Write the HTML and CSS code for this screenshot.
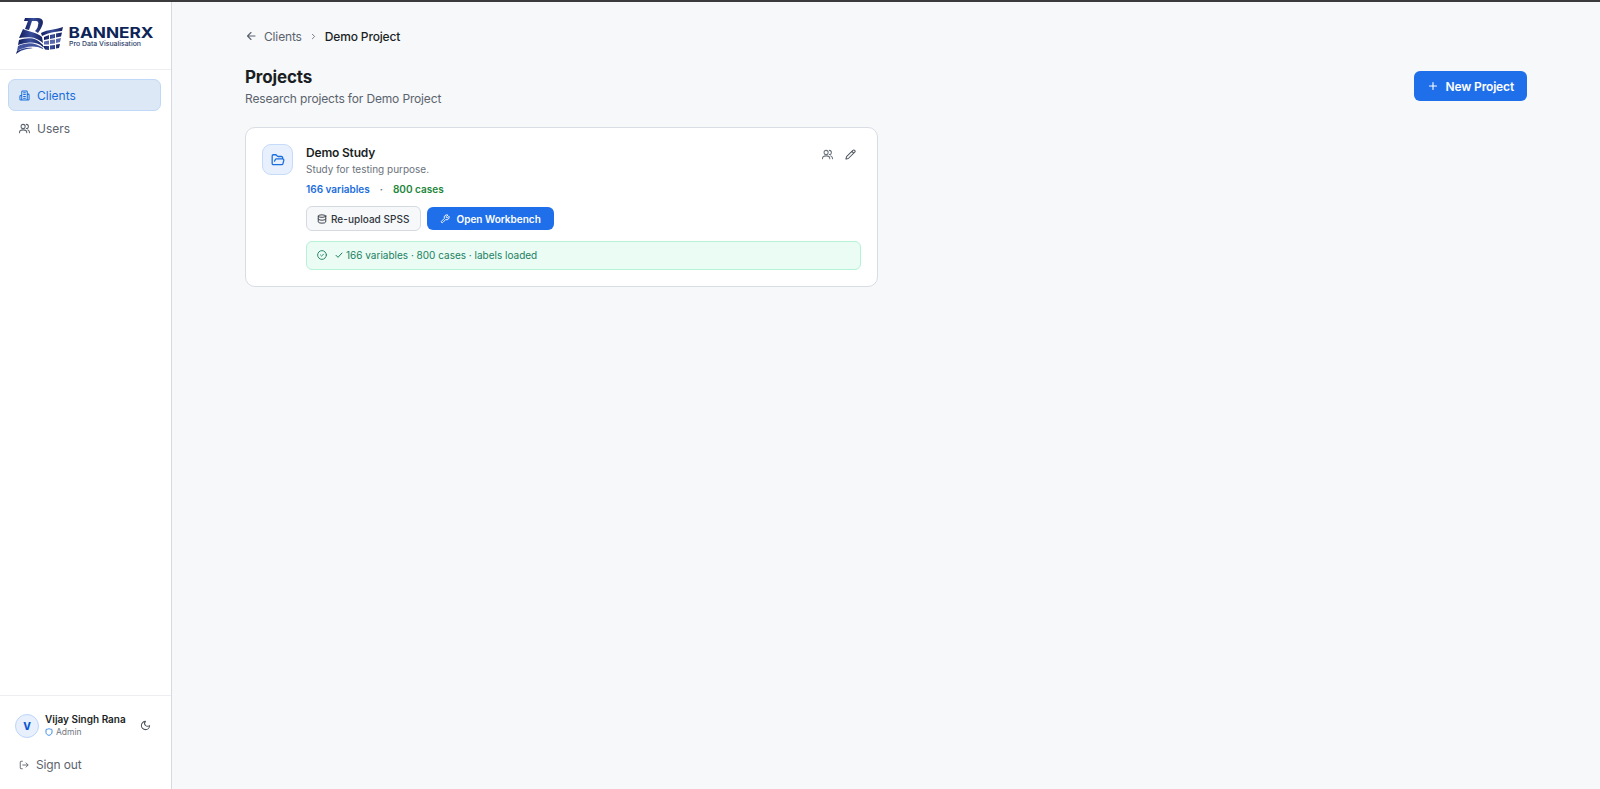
FILE: index.html
```html
<!DOCTYPE html>
<html lang="en">
<head>
    <meta charset="UTF-8">
    <title>BannerX - Projects</title>
    <link rel="stylesheet" href="styles.css">
</head>
<body>
    <!-- Sidebar -->
    <aside class="sidebar">
        <div class="brand">
            <svg class="logo" width="140" height="40" viewBox="0 0 140 40">
                <defs>
                    <linearGradient id="navy" x1="0" y1="0" x2="1" y2="0">
                        <stop offset="0" stop-color="#101c5c"/>
                        <stop offset=".5" stop-color="#3a4f9c"/>
                        <stop offset="1" stop-color="#16215f"/>
                    </linearGradient>
                </defs>
                <path fill="url(#navy)" d="M9 1h13c5 0 6 4 4 8-1 3-3 5-4 7l-3-2c2-2 3-4 3-6 1-2 0-4-2-4h-4l-3 9-4-1 3-8H8z"/>
                <path fill="url(#navy)" d="M7 12c6 3 13 3 19 8l1 6C19 19 12 20 3 21z"/>
                <path fill="url(#navy)" d="M3 23c9-3 17-3 24 5v2c-7-6-16-5-25-2z"/>
                <path fill="#4253a0" d="M2 29c9-4 17-4 25 2v1c-8-4-17-3-26 2z"/>
                <path fill="url(#navy)" d="M1 34c6-3 10-4 16-3-7 1-12 2-17 6z"/>
                <path fill="url(#navy)" d="M25 16c8-4 13-3 22-6l-1 4c-8 1-12 1-20 5z"/>
                <path fill="url(#navy)" d="M28 20l5-2v4l-5 1zM34 18l5-1v4l-5 1zM40 16.500l6-1-1 4-5 1z"/>
                <path fill="#5a69ab" d="M28 24.500l5-1v4h-5zM34 23l5-.500v4l-5 .500zM40 22l5-1-1 4-4 1z"/>
                <path fill="url(#navy)" d="M27 29h6v4l-4-.500zM34 28.500l5-.500v4l-5 .500zM40 27.500l4-.500-1 4-3 .500z"/>
                <text class="logo-name" x="52.500" y="20.500" textLength="85" lengthAdjust="spacingAndGlyphs">BANNERX</text>
                <text class="logo-tag" x="53" y="28.500" textLength="72" lengthAdjust="spacingAndGlyphs">Pro Data Visualisation</text>
            </svg>
        </div>

        <nav class="nav">
            <a class="nav-item active" href="#">
                <svg class="icon" width="11" height="11" viewBox="0 0 24 24"><path d="M6 22V4a2 2 0 0 1 2-2h8a2 2 0 0 1 2 2v18zM6 12H4a2 2 0 0 0-2 2v6a2 2 0 0 0 2 2h2M18 9h2a2 2 0 0 1 2 2v9a2 2 0 0 1-2 2h-2M10 6h4M10 10h4M10 14h4M10 18h4"/></svg>
                Clients
            </a>
            <a class="nav-item" href="#">
                <svg class="icon" width="11" height="11" viewBox="0 0 24 24"><path d="M1 21c0-4 3-6 8-6s8 2 8 6M16 3a4.500 4.500 0 0 1 0 9M19 15c2.500 1 4 3 4 6"/><circle cx="9" cy="7.500" r="4.500"/></svg>
                Users
            </a>
        </nav>

        <div class="account">
            <div class="user">
                <div class="avatar">V</div>
                <div class="user-info">
                    <div class="user-name">Vijay Singh Rana</div>
                    <div class="user-role">
                        <svg class="icon" width="8" height="8" viewBox="0 0 24 24"><path d="M21 13c0 5-3.500 7.500-8.700 9a1 1 0 0 1-.7 0C6.500 20.500 3 18 3 13V5a1 1 0 0 1 1-1c2 0 5.500-.500 7.200-1.700a1.200 1.200 0 0 1 1.500 0C14.500 3.500 18 4 20 4a1 1 0 0 1 1 1z"/></svg>
                        Admin
                    </div>
                </div>
                <svg class="icon moon" width="11" height="11" viewBox="0 0 24 24"><path d="M12 3a6 6 0 0 0 9 9 9 9 0 1 1-9-9z"/></svg>
            </div>
            <a class="sign-out" href="#">
                <svg class="icon" width="10" height="10" viewBox="0 0 24 24"><path d="M8 21H5a2 2 0 0 1-2-2V5a2 2 0 0 1 2-2h3M17 17l5-5-5-5M21 12H9"/></svg>
                Sign out
            </a>
        </div>
    </aside>

    <!-- Content -->
    <main class="main">
        <div class="breadcrumb">
            <svg class="icon" width="12" height="12" viewBox="0 0 24 24"><path d="M12 19l-7-7 7-7M20 12H5"/></svg>
            <a href="#">Clients</a>
            <svg class="icon chevron" width="9" height="9" viewBox="0 0 24 24"><path d="M9 18l6-6-6-6"/></svg>
            <span class="current">Demo Project</span>
        </div>

        <header class="page-head">
            <div>
                <h1>Projects</h1>
                <p>Research projects for Demo Project</p>
            </div>
            <button class="btn-new">
                <svg class="icon" width="12" height="12" viewBox="0 0 24 24"><path d="M5 12h14M12 5v14"/></svg>
                New Project
            </button>
        </header>

        <section class="projects">
            <article class="card">
                <div class="folder">
                    <svg class="icon" width="14" height="14" viewBox="0 0 24 24"><path d="M6 14l1.500-2.900A2 2 0 0 1 9.240 10H20a2 2 0 0 1 1.940 2.500l-1.540 6a2 2 0 0 1-1.950 1.500H4a2 2 0 0 1-2-2V5a2 2 0 0 1 2-2h3.900a2 2 0 0 1 1.690.9l.81 1.200a2 2 0 0 0 1.670.9H18a2 2 0 0 1 2 2v2"/></svg>
                </div>
                <div class="card-body">
                    <div class="card-head">
                        <div>
                            <h2>Demo Study</h2>
                            <p>Study for testing purpose.</p>
                        </div>
                        <div class="card-tools">
                            <svg class="icon" width="11" height="11" viewBox="0 0 24 24"><path d="M1 21c0-4 3-6 8-6s8 2 8 6M16 3a4.500 4.500 0 0 1 0 9M19 15c2.500 1 4 3 4 6"/><circle cx="9" cy="7.500" r="4.500"/></svg>
                            <svg class="icon edit" width="11" height="11" viewBox="0 0 24 24"><path d="M21.200 6.800a1 1 0 0 0-4-4L3.800 16.200a2 2 0 0 0-.5.8L2 21.400a.5.5 0 0 0 .6.6L7 20.700a2 2 0 0 0 .8-.5zM15 5l4 4"/></svg>
                        </div>
                    </div>
                    <div class="stats">
                        <span class="variables">166 variables</span>
                        <span class="dot">·</span>
                        <span class="cases">800 cases</span>
                    </div>
                    <div class="actions">
                        <button class="btn-upload">
                            <svg class="icon" width="10" height="10" viewBox="0 0 24 24"><ellipse cx="12" cy="5" rx="9" ry="3"/><path d="M3 5v14a9 3 0 0 0 18 0V5M3 12a9 3 0 0 0 18 0"/></svg>
                            Re-upload SPSS
                        </button>
                        <button class="btn-open">
                            <svg class="icon" width="10" height="10" viewBox="0 0 24 24"><path d="M14.700 6.300a1 1 0 0 0 0 1.400l1.600 1.600a1 1 0 0 0 1.400 0l3.800-3.800a6 6 0 0 1-7.900 7.900l-6.900 6.900a2.100 2.100 0 0 1-3-3l6.900-6.900a6 6 0 0 1 7.900-7.900z"/></svg>
                            Open Workbench
                        </button>
                    </div>
                    <div class="status">
                        <svg class="icon" width="10" height="10" viewBox="0 0 24 24"><circle cx="12" cy="12" r="10.500"/><path d="M8.500 12l2.500 2.500 4.500-4.500"/></svg>
                        <svg class="icon tick" width="8" height="8" viewBox="0 0 24 24"><path d="M3 13l6 6L21 6"/></svg>
                        <span>166 variables · 800 cases · labels loaded</span>
                    </div>
                </div>
            </article>
        </section>
    </main>
</body>
</html>
```

FILE: styles.css
```css
* {
    box-sizing: border-box;
}

body {
    margin: 0;
    height: 100vh;
    display: flex;
    border-top: 2px solid #3b3b3e;
    background: #f6f8fa;
    color: #1b1f24;
    font-family: Inter, "Liberation Sans", sans-serif;
    font-size: 12px;
    letter-spacing: -0.15px;
    overflow: hidden;
}

h1, h2, p {
    margin: 0;
}

a {
    color: inherit;
    text-decoration: none;
}

button {
    display: flex;
    align-items: center;
    font: inherit;
    border: 0;
}

.icon {
    flex-shrink: 0;
    fill: none;
    stroke: currentColor;
    stroke-width: 2.2;
    stroke-linecap: round;
    stroke-linejoin: round;
}

/* sidebar */
.sidebar {
    width: 172px;
    flex-shrink: 0;
    display: flex;
    flex-direction: column;
    background: #fff;
    border-right: 1px solid #d5dae1;
}

.brand {
    height: 68px;
    padding: 15px 0 0 16px;
    border-bottom: 1px solid #eceef1;
}

.logo {
    display: block;
    letter-spacing: 0;
}

.logo-name {
    font-size: 15px;
    font-weight: 700;
    fill: #0d2458;
}

.logo-tag {
    font-size: 6.5px;
    font-weight: 500;
    fill: #2b3d69;
}

.nav {
    flex: 1;
    padding: 9px 10px 0 8px;
}

.nav-item {
    display: flex;
    align-items: center;
    gap: 7px;
    height: 32px;
    margin-bottom: 1px;
    padding: 0 10px;
    border: 1px solid transparent;
    border-radius: 7px;
    color: #5c636d;
    font-size: 12px;
    letter-spacing: 0;
}

.nav-item.active {
    background: #dce8f5;
    border-color: #bfd8f8;
    color: #1a6ddc;
}

.account {
    height: 94px;
    padding: 17px 15px 0;
    border-top: 1px solid #eceef1;
}

.user {
    display: flex;
    align-items: center;
    letter-spacing: 0;
}

.avatar {
    width: 24px;
    height: 24px;
    margin-right: 6px;
    display: flex;
    align-items: center;
    justify-content: center;
    background: #e8f0fe;
    border: 1px solid #bbd5fb;
    border-radius: 50%;
    color: #0b57d0;
    font-size: 10px;
    font-weight: 800;
}

.user-name {
    font-size: 10px;
    font-weight: 600;
    line-height: 13px;
}

.user-role {
    display: flex;
    align-items: center;
    gap: 3px;
    color: #737982;
    font-size: 8.5px;
    line-height: 12px;
}

.user-role .icon {
    color: #3b8bea;
    stroke-width: 3;
}

.moon {
    margin-left: auto;
    margin-right: 5px;
    color: #4f565f;
}

.sign-out {
    display: flex;
    align-items: center;
    gap: 7px;
    margin-top: 19px;
    padding-left: 4px;
    color: #5c636d;
    line-height: 16px;
}

/* content */
.main {
    flex: 1;
    padding: 25px 73px 0;
}

.breadcrumb {
    display: flex;
    align-items: center;
    gap: 7px;
    height: 18px;
    color: #5c636d;
}

.breadcrumb .current {
    color: #1b1f24;
    font-weight: 500;
}

.page-head {
    display: flex;
    align-items: flex-start;
    justify-content: space-between;
    margin-top: 21px;
}

.page-head h1 {
    font-size: 17px;
    font-weight: 700;
    line-height: 22px;
}

.page-head p {
    color: #5c636d;
    line-height: 22px;
}

.btn-new {
    gap: 7px;
    height: 30px;
    margin-top: 5px;
    padding: 0 13px;
    background: #1f6feb;
    border-radius: 6px;
    color: #fff;
    font-weight: 600;
    letter-spacing: -0.15px;
}

.projects {
    display: grid;
    grid-template-columns: 1fr 1fr;
    gap: 16px;
    margin-top: 17px;
}

.card {
    display: flex;
    gap: 13px;
    height: 160px;
    padding: 16px;
    background: #fff;
    border: 1px solid #d8dde4;
    border-radius: 10px;
    letter-spacing: 0;
}

.folder {
    width: 31px;
    height: 31px;
    flex-shrink: 0;
    display: flex;
    align-items: center;
    justify-content: center;
    background: #e8f0fe;
    border: 1px solid #c5dbfb;
    border-radius: 9px;
    color: #1a6ddc;
}

.card-body {
    flex: 1;
}

.card-head {
    display: flex;
    justify-content: space-between;
}

.card h2 {
    font-size: 12px;
    font-weight: 600;
    letter-spacing: -0.18px;
    line-height: 18px;
}

.card p {
    color: #6b727b;
    font-size: 10px;
    line-height: 15px;
}

.card-tools {
    display: flex;
    gap: 12px;
    padding: 5px 5px 0 0;
    color: #6b727b;
}

.card-tools .edit {
    color: #4f565f;
}

.stats {
    display: flex;
    gap: 10px;
    margin-top: 5px;
    font-size: 10px;
    font-weight: 600;
    line-height: 14px;
}

.variables {
    color: #1a6ddc;
}

.dot {
    color: #6b727b;
}

.cases {
    color: #22863a;
}

.actions {
    display: flex;
    align-items: center;
    gap: 6px;
    margin-top: 10px;
    font-size: 10px;
}

.btn-upload {
    gap: 4px;
    height: 25px;
    padding: 0 11px 0 10px;
    background: #f6f8fa;
    border: 1px solid #d5dae1;
    border-radius: 6px;
    color: #30363d;
    font-weight: 500;
    letter-spacing: 0.03px;
}

.btn-open {
    gap: 6px;
    height: 23px;
    padding: 0 13px;
    background: #1f6feb;
    border-radius: 6px;
    color: #fff;
    font-weight: 600;
    letter-spacing: 0;
}

.status {
    display: flex;
    align-items: center;
    height: 29px;
    margin-top: 10px;
    padding: 0 10px 1px;
    background: #eafcf4;
    border: 1px solid #b5f2d6;
    border-radius: 6px;
    color: #1c8061;
    font-size: 10px;
}

.status .tick {
    margin: 0 3px 0 8px;
    stroke-width: 3;
}
```
